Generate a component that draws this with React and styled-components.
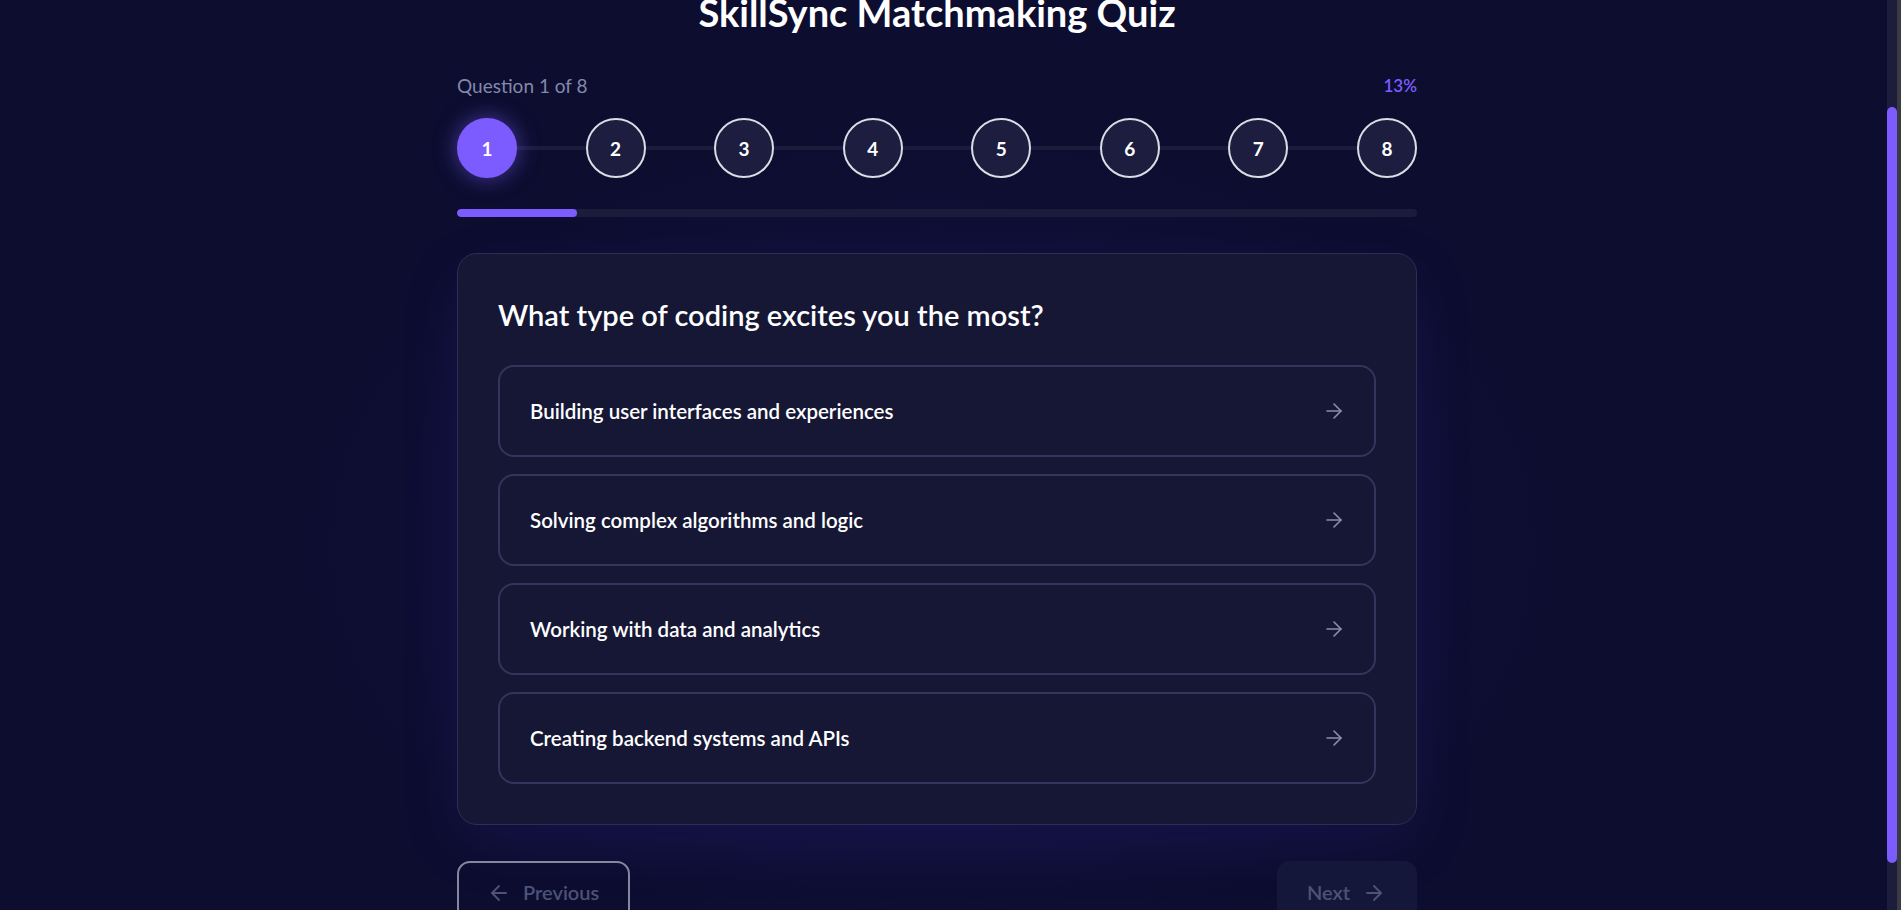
import React, { useLayoutEffect, useRef } from 'react'
import styled, { createGlobalStyle } from 'styled-components'
import { ArrowRight, ArrowLeft } from 'lucide-react'

const questions = [
  {
    text: 'What type of coding excites you the most?',
    options: [
      'Building user interfaces and experiences',
      'Solving complex algorithms and logic',
      'Working with data and analytics',
      'Creating backend systems and APIs',
    ],
  },
]

const TOTAL = 8

const GlobalStyle = createGlobalStyle`
  html, body {
    margin: 0;
    height: 100%;
    overflow: hidden;
    background: #0c0d2f;
  }
  body {
    font-family: "Segoe UI", Lato, "Noto Sans", sans-serif;
    color: #fff;
  }
`

const Shell = styled.div`
  height: 100vh;
  overflow-y: auto;
  background:
    radial-gradient(ellipse 900px 600px at 49% 60%, rgba(40, 32, 120, 0.35), transparent 70%),
    #0c0d2f;
`

const ScrollRail = styled.div`
  position: fixed;
  top: 0;
  right: 0;
  bottom: 0;
  width: 10px;
  background: #1c1d3d;
  border-right: 4px solid #3a3a42;
  z-index: 10;
`

const ScrollThumb = styled.div`
  position: absolute;
  left: 0;
  right: 0;
  border-radius: 5px;
  background: #7c5cff;
`

const Page = styled.div`
  padding: 122px 27px 42px 0;
`

const Container = styled.div`
  width: 960px;
  margin: 0 auto;
`

const Title = styled.h1`
  margin: 0 0 40px;
  text-align: center;
  font-size: 38px;
  line-height: 43px;
  font-weight: 700;
  color: #fff;
`

const LabelRow = styled.div`
  display: flex;
  justify-content: space-between;
  align-items: center;
  line-height: 24px;
  margin-bottom: 20px;
`

const Label = styled.span`
  font-size: ${props => (props.$accent ? '17px' : '19px')};
  color: ${props => (props.$accent ? '#7c5cff' : '#8389ac')};
  font-weight: ${props => (props.$accent ? 600 : 400)};
`

const Steps = styled.div`
  position: relative;
  display: flex;
  justify-content: space-between;
  align-items: center;
  margin-bottom: 31px;

  &::before {
    content: "";
    position: absolute;
    left: 0;
    right: 0;
    top: 50%;
    height: 4px;
    margin-top: -2px;
    background: #1b1c3c;
  }
`

const Step = styled.div`
  position: relative;
  width: 60px;
  height: 60px;
  box-sizing: border-box;
  border-radius: 50%;
  display: flex;
  align-items: center;
  justify-content: center;
  font-size: 19px;
  font-weight: 700;
  color: #fff;
  background: ${props => (props.$active ? '#7c5cff' : '#1c1d3f')};
  border: 2px solid ${props => (props.$active ? '#7c5cff' : '#dcdce4')};
  box-shadow: ${props => (props.$active ? '0 0 22px rgba(124, 92, 255, 0.55)' : 'none')};
`

const Track = styled.div`
  height: 8px;
  border-radius: 4px;
  background: #1b1c3c;
  overflow: hidden;
  margin-bottom: 36px;
`

const Fill = styled.div`
  height: 100%;
  border-radius: 4px;
  background: #7c5cff;
`

const Card = styled.div`
  background: #161735;
  border: 1px solid #2c2e52;
  border-radius: 20px;
  padding: 40px;
  box-shadow: 0 20px 60px rgba(70, 55, 220, 0.12);
`

const Question = styled.h2`
  margin: 0 0 29px;
  font-size: 29px;
  line-height: 42px;
  font-weight: 600;
  color: #fff;
`

const Options = styled.div`
  display: flex;
  flex-direction: column;
  gap: 17px;
`

const Option = styled.button`
  display: flex;
  justify-content: space-between;
  align-items: center;
  width: 100%;
  padding: 32px 28px 32px 30px;
  background: transparent;
  border: 2px solid #33355a;
  border-radius: 16px;
  font-family: inherit;
  font-size: 20.5px;
  line-height: 24px;
  font-weight: 600;
  color: #fff;
  text-align: left;
  cursor: pointer;

  svg {
    color: #8a8fad;
    flex-shrink: 0;
  }
`

const Footer = styled.div`
  display: flex;
  justify-content: space-between;
  margin-top: 36px;
`

const NavButton = styled.button`
  display: flex;
  align-items: center;
  gap: 12px;
  padding: 16px 29px 16px 28px;
  border-radius: 13px;
  font-family: inherit;
  font-size: 20px;
  line-height: 27px;
  font-weight: 600;
  color: #4c5278;
  background: ${props => (props.$filled ? '#15173a' : 'transparent')};
  border: 2px solid ${props => (props.$filled ? 'transparent' : '#85879f')};
  cursor: not-allowed;

  svg {
    flex-shrink: 0;
  }
`

export default function App() {
  const current = 0
  const q = questions[current]
  const pct = Math.round(((current + 1) / TOTAL) * 100)
  const shell = useRef(null)

  useLayoutEffect(() => {
    if (shell.current) shell.current.scrollTop = 131
  }, [])

  return (
    <Shell ref={shell}>
      <GlobalStyle />
      <ScrollRail>
        <ScrollThumb style={{ top: 107, height: 756 }} />
      </ScrollRail>
      <Page>
        <Container>
          <Title>SkillSync Matchmaking Quiz</Title>
          <LabelRow>
            <Label>Question {current + 1} of {TOTAL}</Label>
            <Label $accent>{pct}%</Label>
          </LabelRow>
          <Steps>
            {Array.from({ length: TOTAL }, (_, i) => (
              <Step key={i} $active={i === current}>{i + 1}</Step>
            ))}
          </Steps>
          <Track>
            <Fill style={{ width: `${((current + 1) / TOTAL) * 100}%` }} />
          </Track>
          <Card>
            <Question>{q.text}</Question>
            <Options>
              {q.options.map(opt => (
                <Option key={opt}>
                  <span>{opt}</span>
                  <ArrowRight size={24} strokeWidth={1.6} />
                </Option>
              ))}
            </Options>
          </Card>
          <Footer>
            <NavButton disabled>
              <ArrowLeft size={24} strokeWidth={1.8} />
              Previous
            </NavButton>
            <NavButton $filled disabled>
              Next
              <ArrowRight size={24} strokeWidth={1.8} />
            </NavButton>
          </Footer>
        </Container>
      </Page>
    </Shell>
  )
}
